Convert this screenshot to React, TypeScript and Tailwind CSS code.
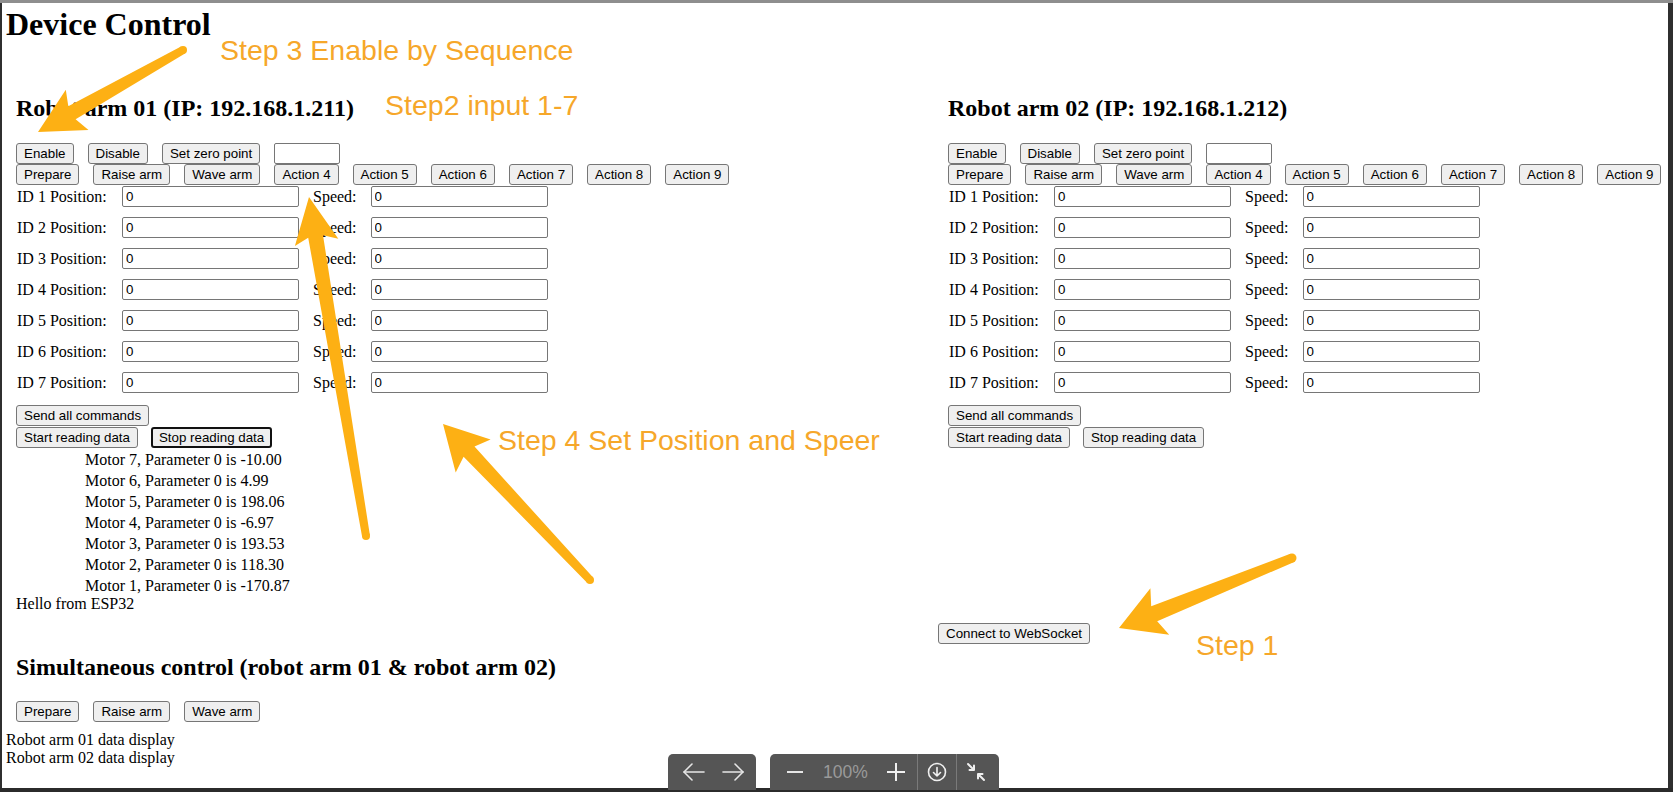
import React from "react";

const sans = "font-['Liberation_Sans',Arial,sans-serif]";

const Btn = ({ children, focused }: { children: React.ReactNode; focused?: boolean }) => (
  <button
    className={`h-[21px] shrink-0 whitespace-nowrap rounded-[3px] bg-[#efefef] ${sans} text-[13.33px] leading-[15px] text-black ${
      focused ? "border-2 border-[#111111] px-[6px]" : "border border-[#767676] px-[7px]"
    }`}
  >
    {children}
  </button>
);

const Field = ({ value, className }: { value?: string; className: string }) => (
  <input
    readOnly
    value={value ?? ""}
    className={`h-[21px] shrink-0 rounded-[2px] border border-[#767676] bg-white px-[3px] ${sans} text-[13.33px] text-black outline-none ${className}`}
  />
);

const actions = ["Prepare", "Raise arm", "Wave arm", "Action 4", "Action 5", "Action 6", "Action 7", "Action 8", "Action 9"];

const readings = [
  ["7", "-10.00"],
  ["6", "4.99"],
  ["5", "198.06"],
  ["4", "-6.97"],
  ["3", "193.53"],
  ["2", "118.30"],
  ["1", "-170.87"],
];

const RobotArm = ({ name, ip, stopFocused }: { name: string; ip: string; stopFocused?: boolean }) => (
  <div className="pl-[10px]">
    <h2 className="mt-[51px] whitespace-nowrap text-[24px] font-bold leading-[28px]">
      {name} (IP: {ip})
    </h2>
    <div className="mt-[21px] flex gap-[14px]">
      <Btn>Enable</Btn>
      <Btn>Disable</Btn>
      <Btn>Set zero point</Btn>
      <Field className="w-[66px]" />
    </div>
    <div className="flex gap-[14px]">
      {actions.map((a) => (
        <Btn key={a}>{a}</Btn>
      ))}
    </div>
    <div className="mt-px">
      {[1, 2, 3, 4, 5, 6, 7].map((id) => (
        <div key={id} className="mb-[10px] flex h-[21px] items-center whitespace-nowrap text-[16px] leading-[18px]">
          <span className="w-[90px] shrink-0 pl-px">ID {id} Position:</span>
          <Field value="0" className="ml-[16px] w-[177px]" />
          <span className="ml-[14px] shrink-0">Speed:</span>
          <Field value="0" className="ml-[14px] w-[177px]" />
        </div>
      ))}
    </div>
    <div className="mt-px">
      <Btn>Send all commands</Btn>
    </div>
    <div className="flex gap-[13px]">
      <Btn>Start reading data</Btn>
      <Btn focused={stopFocused}>Stop reading data</Btn>
    </div>
  </div>
);

function arrowPath(x0: number, y0: number, x1: number, y1: number, L: number, W: number, t0: number, t1: number) {
  const dx = x1 - x0;
  const dy = y1 - y0;
  const len = Math.hypot(dx, dy);
  const ux = dx / len;
  const uy = dy / len;
  const px = -uy;
  const py = ux;
  const bx = x1 - ux * L;
  const by = y1 - uy * L;
  const pts = [
    [x0 + px * t0, y0 + py * t0],
    [bx + px * t1 + ux * 3, by + py * t1 + uy * 3],
    [bx + px * W - ux * 3, by + py * W - uy * 3],
    [x1, y1],
    [bx - px * W - ux * 3, by - py * W - uy * 3],
    [bx - px * t1 + ux * 3, by - py * t1 + uy * 3],
    [x0 - px * t0, y0 - py * t0],
  ];
  return "M" + pts.map((p) => `${p[0].toFixed(1)} ${p[1].toFixed(1)}`).join(" L") + " Z";
}

const arrows = [
  { x0: 183, y0: 50, x1: 38, y1: 132, L: 42, W: 23, t0: 4, t1: 7.5 },
  { x0: 366, y0: 536, x1: 309, y1: 197, L: 43, W: 22, t0: 4, t1: 7.5 },
  { x0: 590, y0: 580, x1: 443, y1: 424, L: 41, W: 24, t0: 4, t1: 7.5 },
  { x0: 1292, y0: 558, x1: 1119, y1: 628, L: 41, W: 25, t0: 4.5, t1: 8 },
];

const notes = [
  { text: "Step 3 Enable by Sequence", cls: "left-[220px] top-[36px]" },
  { text: "Step2 input 1-7", cls: "left-[385px] top-[91px]" },
  { text: "Step 4 Set Position and Speer", cls: "left-[498px] top-[426px]" },
  { text: "Step 1", cls: "left-[1196px] top-[631px]" },
];

const ArrowLine = ({ dir }: { dir: "left" | "right" }) => (
  <svg width="22" height="18" viewBox="0 0 22 18" fill="none" stroke="#e6e6e6" strokeWidth="1.6" strokeLinecap="round" strokeLinejoin="round">
    {dir === "left" ? (
      <>
        <path d="M1 9 H21" />
        <path d="M9 1 L1 9 L9 17" />
      </>
    ) : (
      <>
        <path d="M1 9 H21" />
        <path d="M13 1 L21 9 L13 17" />
      </>
    )}
  </svg>
);

const App = () => {
  return (
    <div className="relative flex h-[792px] w-[1673px] flex-col overflow-hidden bg-white font-['Liberation_Serif',serif] text-black">
      <div className="h-[3px] shrink-0 bg-[#8e8e8e]" />
      <div className="flex min-h-0 flex-1">
        <div className="w-[2px] shrink-0 bg-[#2f2f2f]" />
        <main className="min-w-0 flex-1 pl-[4px]">
          <h1 className="mt-[3px] text-[32px] font-bold leading-[37px]">Device Control</h1>

          <div className="flex">
            <div className="w-[932px] shrink-0 pb-[33px]">
              <RobotArm name="Robot arm 01" ip="192.168.1.211" stopFocused />
              <div className="mt-px pl-[79px] text-[16px] leading-[21px]">
                {readings.map(([m, v]) => (
                  <div key={m}>
                    Motor {m}, Parameter 0 is {v}
                  </div>
                ))}
              </div>
              <div className="pl-[10px] text-[16px] leading-[16px]">Hello from ESP32</div>
            </div>

            <div className="flex min-w-0 flex-1 flex-col">
              <RobotArm name="Robot arm 02" ip="192.168.1.212" />
              <div className="mt-auto">
                <Btn>Connect to WebSocket</Btn>
              </div>
            </div>
          </div>

          <div className="pl-[10px]">
            <h2 className="mt-[8px] text-[24px] font-bold leading-[28px]">
              Simultaneous control (robot arm 01 &amp; robot arm 02)
            </h2>
            <div className="mt-[20px] flex gap-[14px]">
              <Btn>Prepare</Btn>
              <Btn>Raise arm</Btn>
              <Btn>Wave arm</Btn>
            </div>
          </div>
          <div className="mt-[9px] text-[16px] leading-[18.4px]">
            <div>Robot arm 01 data display</div>
            <div>Robot arm 02 data display</div>
          </div>
        </main>
        <div className="w-[5px] shrink-0 bg-[#2f2f2f]" />
      </div>
      <div className="h-[4px] shrink-0 bg-[#2b2b2b]" />

      {/* annotations */}
      <svg className="pointer-events-none absolute left-0 top-0" width="1673" height="792">
        {arrows.map((a, i) => (
          <g key={i} fill="#fdb014">
            <path d={arrowPath(a.x0, a.y0, a.x1, a.y1, a.L, a.W, a.t0, a.t1)} />
            <circle cx={a.x0} cy={a.y0} r={a.t0} />
          </g>
        ))}
      </svg>
      {notes.map((n) => (
        <span
          key={n.text}
          className={`absolute whitespace-nowrap ${sans} text-[28.5px] leading-[28.5px] text-[#f6a72a] ${n.cls}`}
        >
          {n.text}
        </span>
      ))}

      {/* viewer toolbar */}
      <div className="absolute left-[668px] top-[754px] flex gap-[14px]">
        <div className="flex h-[36px] w-[88px] items-center gap-[17px] rounded-t-[5px] bg-[#555555] pl-[15px]">
          <ArrowLine dir="left" />
          <ArrowLine dir="right" />
        </div>
        <div className="flex h-[36px] w-[229px] items-stretch rounded-t-[5px] bg-[#555555]">
          <div className="flex items-center pl-[17px]">
            <svg width="16" height="16" viewBox="0 0 16 16" stroke="#e6e6e6" strokeWidth="2">
              <path d="M0 8 H16" />
            </svg>
            <span className={`ml-[20px] ${sans} text-[17.5px] text-[#9a9a9a]`}>100%</span>
            <svg className="ml-[19px]" width="18" height="18" viewBox="0 0 18 18" stroke="#f0f0f0" strokeWidth="2">
              <path d="M0 9 H18 M9 0 V18" />
            </svg>
          </div>
          <div className="ml-[12px] w-px bg-[#7a7a7a]" />
          <div className="flex items-center px-[9px]">
            <svg width="20" height="20" viewBox="0 0 20 20" fill="none" stroke="#f0f0f0" strokeWidth="1.6" strokeLinecap="round" strokeLinejoin="round">
              <circle cx="10" cy="10" r="8.5" />
              <path d="M10 5.5 V14 M6.5 10.5 L10 14 L13.5 10.5" />
            </svg>
          </div>
          <div className="w-px bg-[#7a7a7a]" />
          <div className="flex items-center px-[9px]">
            <svg width="20" height="20" viewBox="0 0 20 20" fill="none" stroke="#f0f0f0" strokeWidth="2" strokeLinecap="round" strokeLinejoin="round">
              <path d="M2 2 L8 8 M3.5 8 H8 V3.5" />
              <path d="M18 18 L12 12 M12 16.5 V12 H16.5" />
            </svg>
          </div>
        </div>
      </div>
    </div>
  );
};

export default App;
